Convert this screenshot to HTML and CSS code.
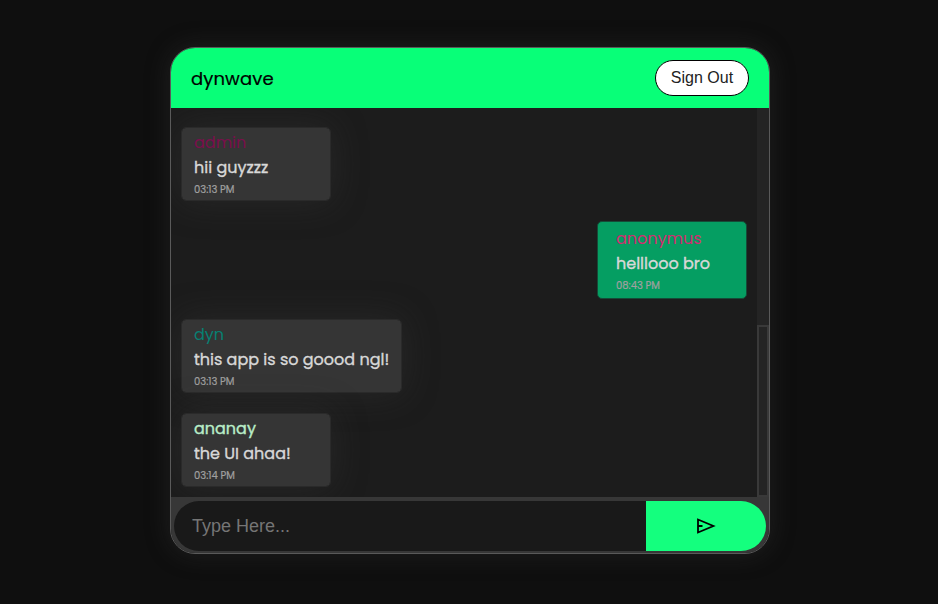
FILE: index.html
```html
<!DOCTYPE html>
<html lang="en">
<head>
<meta charset="utf-8">
<title>dynwave</title>
<link rel="stylesheet" href="styles.css">
</head>
<body>
<main class="chat">
  <header class="top">
    <h1 class="brand">dynwave</h1>
    <button class="signout">Sign Out</button>
  </header>
  <div class="body">
    <section class="messages">
      <article class="msg">
        <div class="name admin">admin</div>
        <div class="text">hii guyzzz</div>
        <div class="time">03:13 PM</div>
      </article>
      <article class="msg own">
        <div class="name anonymus">anonymus</div>
        <div class="text">helllooo bro</div>
        <div class="time">08:43 PM</div>
      </article>
      <article class="msg wide">
        <div class="name dyn">dyn</div>
        <div class="text">this app is so goood ngl!</div>
        <div class="time">03:13 PM</div>
      </article>
      <article class="msg">
        <div class="name ananay">ananay</div>
        <div class="text">the UI ahaa!</div>
        <div class="time">03:14 PM</div>
      </article>
    </section>
    <div class="track"><div class="thumb"></div></div>
  </div>
  <form class="composer">
    <input class="field" type="text" placeholder="Type Here...">
    <button class="send" type="button" aria-label="Send">
      <svg width="20" height="18" viewBox="0 0 20 18" fill="none" stroke="#000" stroke-width="1.8"><path d="M2 2.5V15.5L17.4 9Z"/><path d="M2 9H6.5"/></svg>
    </button>
  </form>
</main>
</body>
</html>
```

FILE: styles.css
```css
* { box-sizing: border-box; margin: 0; }
body {
  height: 604px;
  overflow: hidden;
  background: #0f0f0f;
  padding: 47px 0 0 170px;
  font-family: Poppins, Inter, sans-serif;
}
.chat {
  width: 600px;
  height: 507px;
  border: 1px solid #5a5a5a;
  border-radius: 25px;
  overflow: hidden;
  background: #1c1c1c;
  box-shadow: 0 0 25px rgba(64, 64, 64, .35);
  display: flex;
  flex-direction: column;
}
.top {
  height: 60px;
  flex: none;
  background: #08ff78;
  display: flex;
  align-items: center;
  justify-content: space-between;
  padding: 0 20px;
}
.brand { font-size: 18px; font-weight: 400; line-height: 27px; color: #000; letter-spacing: .1px; -webkit-text-stroke: .2px; }
.signout {
  width: 94px;
  height: 36px;
  padding: 0;
  border: 1px solid #000;
  border-radius: 18px;
  background: #fff;
  color: #222;
  font: 16px "Liberation Sans", Arial, sans-serif;
}
.body { height: 389px; flex: none; display: flex; overflow: hidden; }
.messages {
  flex: 1;
  display: flex;
  flex-direction: column;
  align-items: flex-start;
  gap: 20px;
  padding: 19px 10px 0;
  overflow: hidden;
}
.msg {
  width: 150px;
  height: 74px;
  flex: none;
  padding: 3px 12px;
  border: 1px solid #2a2a2a;
  border-radius: 5px;
  background: #353535;
  background-clip: padding-box;
  box-shadow: 0 0 35px rgba(64, 64, 64, .35);
}
.msg.wide { width: 221px; }
.msg.own {
  align-self: flex-end;
  height: 78px;
  padding: 5px 18px;
  border-color: #154b37;
  background: #059e62;
  box-shadow: none;
}
.name, .text { font-size: 16px; line-height: 24px; white-space: nowrap; font-weight: 400; }
.name { height: 25px; }
.text { color: #d8d8d8; height: 26px; -webkit-text-stroke: .35px; }
.time { font-size: 10px; line-height: 15px; color: #a0a0a0; white-space: nowrap; -webkit-text-stroke: .2px; }
.admin { color: #7b0e4c; }
.anonymus { color: #d22c70; }
.dyn { color: #078073; }
.ananay { color: #b9edc8; -webkit-text-stroke: .35px; }
.track { width: 12px; background: #242424; padding-top: 217px; }
.thumb { height: 172px; border: 2px solid #393939; background: #242424; }
.composer {
  height: 56px;
  flex: none;
  background: #373737;
  padding: 4px 3px 2px;
  display: flex;
}
.field {
  flex: 1;
  min-width: 0;
  height: 50px;
  border: 0;
  border-radius: 25px 0 0 25px;
  padding: 0 18px;
  background: #191919;
  color: #ddd;
  outline: 0;
  font: 18px "Liberation Sans", Arial, sans-serif;
}
.field::placeholder { color: #757575; }
.send {
  width: 120px;
  height: 50px;
  border: 0;
  padding: 0;
  border-radius: 0 25px 25px 0;
  background: #14ff7e;
  display: flex;
  align-items: center;
  justify-content: center;
}
```
